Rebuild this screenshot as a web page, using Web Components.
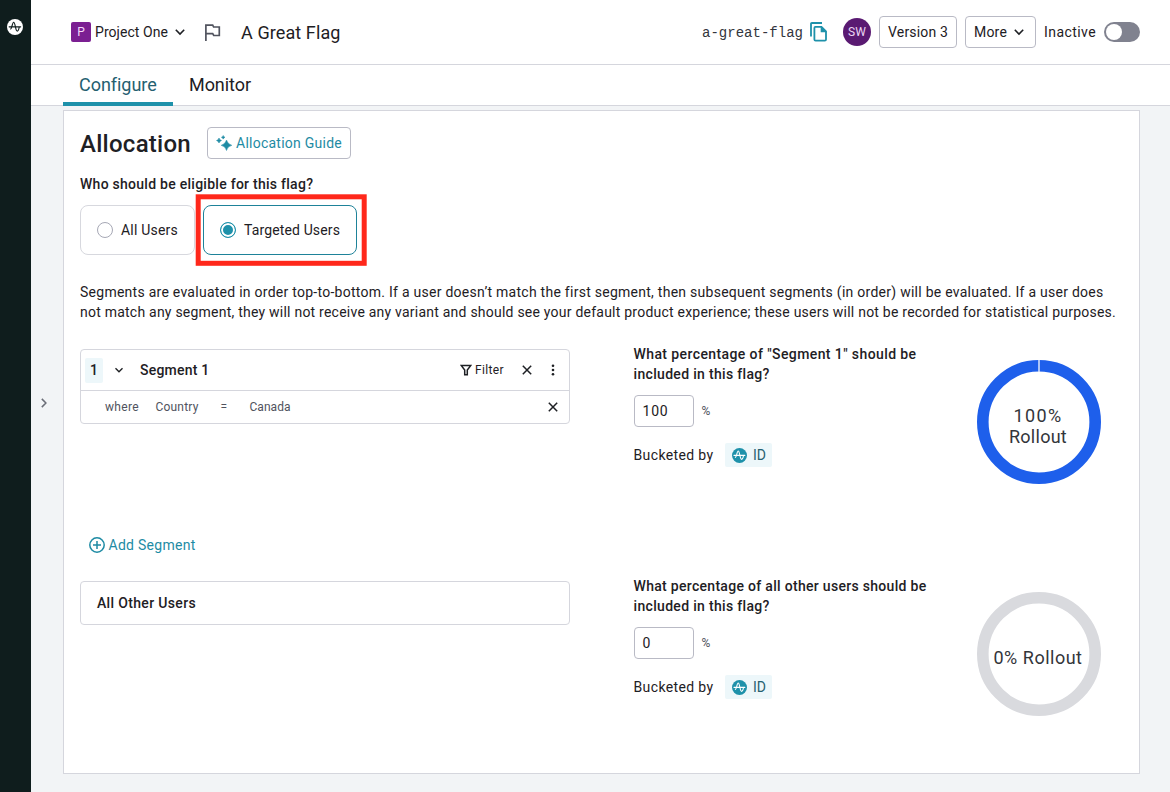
<!DOCTYPE html>
<html lang="en">
<head>
<meta charset="utf-8">
<title>A Great Flag</title>
<style>
html,body{margin:0;height:100%}
body{font:14px/20px Roboto,"Noto Sans",sans-serif;color:#1e2024;background:#f2f4f6;overflow:hidden}
</style>
</head>
<body>
<flag-page></flag-page>
<script>
const define=(name,html,ready)=>{
  const t=document.createElement('template');t.innerHTML=html;
  customElements.define(name,class extends HTMLElement{
    constructor(){super();this.attachShadow({mode:'open'}).append(t.content.cloneNode(true));}
    connectedCallback(){if(ready)ready(this,this.shadowRoot);}
  });
};

/* Text run tracked to a given measure */
define('ui-text',`<style>:host{display:block;white-space:nowrap;flex:none}span{display:inline-block;white-space:nowrap}</style><span><slot></slot></span>`,(el,root)=>{
  const s=root.querySelector('span'),w=+el.getAttribute('measure');
  if(!w)return;
  el.style.width=w+'px';
  s.style.letterSpacing='0px';
  const n=el.textContent.length;
  s.style.letterSpacing=((w-s.getBoundingClientRect().width)/n)+'px';
});

const icons={
  amp:['0 0 24 24','<circle cx="12" cy="12" r="12" fill="var(--disc,#fff)"/><path d="M3.200 11.800H20.500M5.400 15C7.200 15 8 4.800 10 4.800C12.400 4.800 12.600 18.200 15.400 18.200C17 18.200 17.800 15.400 18.400 12" fill="none" stroke="currentColor" stroke-width="1.700" stroke-linecap="round"/>'],
  chev:['0 0 12 12','<path d="M1.8 3.8 6 8.1 10.2 3.8" fill="none" stroke="currentColor" stroke-width="1.6"/>'],
  flag:['0 0 18 20','<path d="M2 19V2.2H9.2L10.2 4.2H16.2V13.2H10.3L9.2 11.2H2" fill="none" stroke="currentColor" stroke-width="1.8"/>'],
  copy:['0 0 17 20','<path d="M1 14.5V1.9Q1 1 1.9 1H12" fill="none" stroke="currentColor" stroke-width="1.8"/><path d="M5.4 4.9H11.5L16 9.4V17.4Q16 18.6 14.8 18.6H5.6Q4.4 18.6 4.4 17.4V5.9Q4.4 4.9 5.4 4.9Z" fill="none" stroke="currentColor" stroke-width="1.8"/><path d="M10.7 4.5V10.2H16.5Z" fill="currentColor"/>'],
  spark:['0 0 16 16','<g fill="currentColor" stroke="currentColor" stroke-width=".5" stroke-linejoin="round"><path d="M10.500 5Q11.600 9.100 15.800 10.300Q11.600 11.400 10.500 15.500Q9.400 11.400 5.200 10.300Q9.400 9.100 10.500 5Z"/><path d="M3 3Q3.500 5 5.500 5.500Q3.500 6 3 8Q2.500 6 .500 5.500Q2.500 5 3 3Z"/><path d="M7.200.500Q7.600 1.900 9 2.300Q7.600 2.700 7.200 4.100Q6.800 2.700 5.400 2.300Q6.800 1.900 7.200.500Z"/></g>'],
  funnel:['0 0 12 12','<path d="M1.2 1.400H10.800L7.300 6V10.800H4.700V6Z" fill="none" stroke="currentColor" stroke-width="1.500"/>'],
  x:['0 0 10 10','<path d="M.8.800 9.200 9.200M9.200.800.800 9.200" fill="none" stroke="currentColor" stroke-width="1.500"/>'],
  dots:['0 0 4 12','<g fill="currentColor"><circle cx="2" cy="1.700" r="1.300"/><circle cx="2" cy="6" r="1.300"/><circle cx="2" cy="10.300" r="1.300"/></g>'],
  plus:['0 0 16 16','<circle cx="8" cy="8" r="7.200" fill="none" stroke="currentColor" stroke-width="1.500"/><path d="M8 4V12M4 8H12" fill="none" stroke="currentColor" stroke-width="1.500"/>'],
  right:['0 0 6 10','<path d="M.8.900 4.900 5 .800 9.100" fill="none" stroke="currentColor" stroke-width="1.500"/>']
};
define('ui-icon','<style>:host{display:block;flex:none}svg{display:block;width:100%;height:100%}</style><svg></svg>',(el,root)=>{
  const [vb,body]=icons[el.getAttribute('name')],s=root.querySelector('svg');
  s.setAttribute('viewBox',vb);s.innerHTML=body;
  el.style.width=el.getAttribute('w')+'px';el.style.height=(el.getAttribute('h')||el.getAttribute('w'))+'px';
});

define('side-rail',`<style>
:host{display:flex;flex-direction:column;align-items:center;width:31px;box-sizing:border-box;padding:18.500px 1px 0 0;background:#0f1d1d;color:#0f1d1d}
</style><ui-icon name="amp" w="16"></ui-icon>`);

define('ui-button',`<style>
:host{display:flex;align-items:center;box-sizing:border-box;height:32px;border:1px solid #b9bac5;border-radius:4px;padding:0 8px;background:#fff;flex:none}
</style><slot></slot>`);

define('ui-toggle',`<style>
:host{display:flex;align-items:center;box-sizing:border-box;width:36px;height:20px;border-radius:10px;background:#80828f;padding:1px 2px}
i{width:16px;height:16px;border-radius:50%;background:#fff}
</style><i></i>`);

define('app-header',`<style>
:host{display:flex;align-items:center;box-sizing:border-box;height:65px;padding:0 30px 0 40px;border-bottom:1px solid #d5d6dd;background:#fff}
.tile{width:20px;height:20px;border-radius:2px;background:#7b1f92;color:#f3d9fa;font-size:12px;text-align:center;margin-right:4px}
.title{font-size:18px;line-height:24px;margin:1px 0 0 20px}
.id{font-family:"Liberation Mono",monospace;margin:1px 0 0 auto;color:#33353d}
.av{width:28px;height:28px;border-radius:50%;background:#5a1a72;color:#ead5f2;font-size:12px;display:flex;align-items:center;justify-content:center;margin:0 8px 0 16px}
ui-button{margin-right:8px}ui-toggle{margin-left:8px}
</style>
<div class="tile">P</div><ui-text measure="73">Project One</ui-text>
<ui-icon name="chev" w="12" style="margin-left:6px"></ui-icon>
<ui-icon name="flag" w="17" h="19" style="margin-left:18px;color:#50535e"></ui-icon>
<ui-text class="title" measure="99.500">A Great Flag</ui-text>
<ui-text class="id" measure="101">a-great-flag</ui-text>
<ui-icon name="copy" w="17" h="20" style="margin-left:7px;color:#1e91aa"></ui-icon>
<div class="av"><ui-text measure="18">SW</ui-text></div>
<ui-button><ui-text measure="60">Version 3</ui-text></ui-button>
<ui-button><ui-text measure="33">More</ui-text><ui-icon name="chev" w="12" style="margin:0 2px 0 6px"></ui-icon></ui-button>
<ui-text measure="52">Inactive</ui-text><ui-toggle></ui-toggle>`);

define('tab-bar',`<style>
:host{display:flex;box-sizing:border-box;height:41px;padding-left:32px;border-bottom:1px solid #d5d6dd;background:#fff;font-size:18px;line-height:39px}
div{box-sizing:border-box;height:41px;padding:0 16px}
.on{color:#256070;border-bottom:4px solid #1e91aa}
</style><div class="on"><ui-text measure="77" style="width:78px">Configure</ui-text></div><div><ui-text measure="62">Monitor</ui-text></div>`,(el,root)=>{
  root.querySelector('.on').style.width='110px';
});

define('radio-card',`<style>
:host{display:flex;align-items:center;box-sizing:border-box;height:50px;padding:0 16px;border:1px solid #d7d8de;border-radius:8px;gap:8px}
:host([checked]){border-color:#1e8299}
i{box-sizing:border-box;width:16px;height:16px;border:1px solid #a6a8b5;border-radius:50%;background:#fff}
:host([checked]) i{border-color:#1e91aa;background:#1e91aa;box-shadow:inset 0 0 0 2px #fff}
</style><i></i><slot></slot>`);

define('segment-card',`<style>
:host{display:block;box-sizing:border-box;width:490px;border:1px solid #d5d6dd;border-radius:4px}
.h{display:flex;align-items:center;height:40px;padding:0 14px 0 4px;border-bottom:1px solid #d5d6dd}
.n{width:18px;height:25px;border-radius:2px;background:#edf7fa;text-align:center;line-height:25px;font-weight:500}
.q{display:flex;align-items:center;height:32px;padding:0 11px 0 24px;font-size:12px;color:#50535e}
</style>
<div class="h"><div class="n">1</div><ui-icon name="chev" w="10" style="margin:0 16px 0 11px"></ui-icon>
<ui-text measure="69.500" style="font-weight:500">Segment 1</ui-text>
<ui-icon name="funnel" w="12" style="margin:0 3px 0 auto"></ui-icon><ui-text measure="29" style="font-size:12px">Filter</ui-text>
<ui-icon name="x" w="10" style="margin:0 19px 0 18px"></ui-icon><ui-icon name="dots" w="4" h="12"></ui-icon></div>
<div class="q"><ui-text measure="34">where</ui-text><ui-text measure="43" style="margin-left:16.500px">Country</ui-text><ui-text measure="7" style="margin-left:22px">=</ui-text><ui-text measure="41" style="margin-left:22px">Canada</ui-text>
<ui-icon name="x" w="10" style="margin-left:auto;color:#1e2024"></ui-icon></div>`);

define('rollout-form',`<style>
:host{display:block;width:300px}
.q{font-weight:500}
.r{display:flex;align-items:center;margin-top:11px}
.in{box-sizing:border-box;width:60px;height:32px;border:1px solid #b9bac5;border-radius:4px;padding:0 8px;line-height:30px}
.p{font-size:12px;color:#50535e;margin-left:8px}
.b{display:flex;align-items:center;margin-top:16px}
.id{display:flex;align-items:center;box-sizing:border-box;height:24px;width:47px;padding-left:7px;gap:6px;margin-left:11.500px;border-radius:2px;background:#edf7fa;color:#256070;font-size:14px}
.id ui-icon{--disc:#1e91aa;color:#fff}
</style>
<div class="q"><slot></slot></div>
<div class="r"><div class="in"><slot name="value"></slot></div><ui-text class="p" measure="11">%</ui-text></div>
<div class="b"><ui-text measure="80">Bucketed by</ui-text><div class="id"><ui-icon name="amp" w="15"></ui-icon><ui-text measure="13">ID</ui-text></div></div>`);

define('rollout-ring',`<style>
:host{display:grid;width:124px;height:124px;place-items:center;color:#33353a;font-size:18px;line-height:21px}
svg,.t{grid-area:1/1}svg{display:block}
.t{display:flex;flex-direction:column;align-items:center;padding-top:8px;margin-right:2px}
</style><svg width="124" height="124"><circle cx="62" cy="62" r="56.200" fill="none" stroke="var(--ring)" stroke-width="11.600"/><path d="M62 0V12" stroke="var(--seam,transparent)" stroke-width="1.500"/></svg><div class="t"><slot></slot></div>`);

define('allocation-panel',`<style>
:host{display:block;box-sizing:border-box;width:1077px;height:664px;margin:4px 0 0 32px;padding:16px;border:1px solid #d5d6dd;background:#fff}
.top{display:flex;align-items:center;gap:16px}
h1{margin:0;padding-top:2px;font-size:24px;line-height:30px;font-weight:500}
.link{color:#1e8ba4}
.ask{margin-top:15px;font-weight:500}
.opts{display:flex;gap:8px;margin-top:11px}
.mark{position:relative}
.mark svg{position:absolute;left:-8px;top:-12px;overflow:visible}
.copy{margin-top:27px}
.row{display:grid;grid-template-columns:553.500px 343.500px 124px}
.r1{margin-top:22px;height:232px}
.left{padding-top:5px}
.add{display:flex;align-items:center;gap:4px;margin:111px 0 0 8.500px;color:#1e8ba4}
.other{box-sizing:border-box;width:490px;height:44px;border:1px solid #d5d6dd;border-radius:4px;padding:0 16px;line-height:42px;font-weight:500}
rollout-ring{margin-top:15.500px}
</style>
<div class="top"><h1><ui-text measure="111">Allocation</ui-text></h1><ui-button class="link"><ui-icon name="spark" w="16" style="margin-right:4px"></ui-icon><ui-text measure="106">Allocation Guide</ui-text></ui-button></div>
<div class="ask"><ui-text measure="233">Who should be eligible for this flag?</ui-text></div>
<div class="opts"><radio-card><ui-text measure="57">All Users</ui-text></radio-card><div class="mark"><radio-card checked><ui-text measure="96">Targeted Users</ui-text></radio-card><svg width="172" height="74"><rect x="3.200" y="3.800" width="166" height="66.500" fill="none" stroke="#ff281b" stroke-width="5"/></svg></div></div>
<div class="copy"><ui-text measure="1023">Segments are evaluated in order top-to-bottom. If a user doesn’t match the first segment, then subsequent segments (in order) will be evaluated. If a user does</ui-text><ui-text measure="1036">not match any segment, they will not receive any variant and should see your default product experience; these users will not be recorded for statistical purposes.</ui-text></div>
<div class="row r1"><div class="left"><segment-card></segment-card><div class="add"><ui-icon name="plus" w="16"></ui-icon><ui-text measure="87">Add Segment</ui-text></div></div>
<rollout-form><ui-text measure="283">What percentage of "Segment 1" should be</ui-text><ui-text measure="136">included in this flag?</ui-text><ui-text slot="value" measure="26">100</ui-text></rollout-form>
<rollout-ring style="--ring:#1e5feb;--seam:#dfe7fa"><ui-text measure="49">100%</ui-text><ui-text measure="58">Rollout</ui-text></rollout-ring></div>
<div class="row"><div class="left"><div class="other"><ui-text measure="99">All Other Users</ui-text></div></div>
<rollout-form><ui-text measure="293">What percentage of all other users should be</ui-text><ui-text measure="136">included in this flag?</ui-text><ui-text slot="value" measure="9">0</ui-text></rollout-form>
<rollout-ring style="--ring:#d9dade"><ui-text measure="89">0% Rollout</ui-text></rollout-ring></div>`);

define('flag-page',`<style>
:host{display:grid;grid-template-columns:31px 1fr;height:792px}
main{display:flex;flex-direction:column;min-width:0}
.body{display:flex;position:relative}
.open{position:absolute;left:10px;top:292px;color:#6b6e78}
</style><side-rail></side-rail><main><app-header></app-header><tab-bar></tab-bar><div class="body"><ui-icon class="open" name="right" w="6" h="10"></ui-icon><allocation-panel></allocation-panel></div></main>`);
</script>
</body>
</html>
